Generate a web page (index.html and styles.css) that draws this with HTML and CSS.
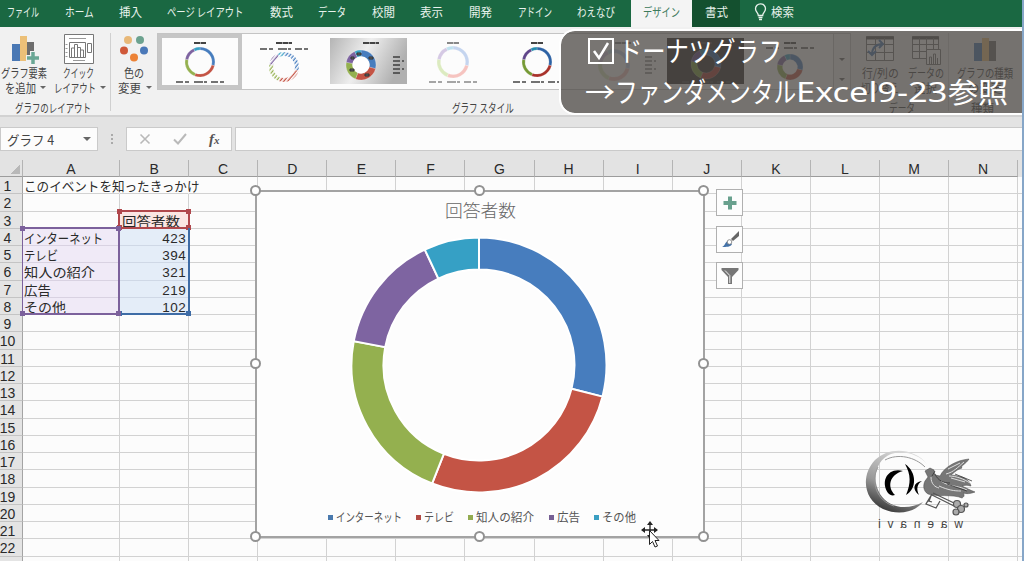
FILE: index.html
```html
<!DOCTYPE html>
<html lang="ja">
<head>
    <meta charset="UTF-8">
    <meta name="viewport" content="width=device-width, initial-scale=1.0">
    <title>ドーナツグラフ - Excel</title>
    <link rel="stylesheet" href="styles.css">
</head>
<body>
    <div class="window">
        <nav class="tabs">
            <span class="tab"><span class="fit" data-w="32">ファイル</span></span>
            <span class="tab"><span class="fit" data-w="29">ホーム</span></span>
            <span class="tab"><span class="fit" data-w="23">挿入</span></span>
            <span class="tab"><span class="fit" data-w="76">ページ レイアウト</span></span>
            <span class="tab"><span class="fit" data-w="23">数式</span></span>
            <span class="tab"><span class="fit" data-w="28">データ</span></span>
            <span class="tab"><span class="fit" data-w="23">校閲</span></span>
            <span class="tab"><span class="fit" data-w="23">表示</span></span>
            <span class="tab"><span class="fit" data-w="23">開発</span></span>
            <span class="tab"><span class="fit" data-w="34">アドイン</span></span>
            <span class="tab"><span class="fit" data-w="38">わえなび</span></span>
            <span class="tab tab-active"><span class="fit" data-w="37">デザイン</span></span>
            <span class="tab tab-context"><span class="fit" data-w="23">書式</span></span>
            <span class="tab tab-search">
                <svg width="13" height="18" viewBox="0 0 13 18" fill="none" stroke="#e8f2ec" stroke-width="1.3">
                    <path d="M4.3 12.5C4.3 9.8 1.5 9 1.5 5.8a5 5 0 0 1 10 0c0 3.200-2.800 4-2.800 6.700zM4.500 14.500h4M5 16.500h3"/>
                </svg>
                <span class="fit" data-w="23">検索</span>
            </span>
        </nav>

        <div class="ribbon">
            <section class="group group-layout">
                <div class="buttons">
                    <div class="button">
                        <svg width="30" height="32" viewBox="0 0 30 32">
                            <path fill="#4a78b4" d="M2 11h8v17H2z"/>
                            <path fill="#ecc078" d="M10 3h7v25h-7z"/>
                            <path fill="#6d6d6d" d="M17 9h7v19h-7z"/>
                            <path stroke="#f1f1f1" stroke-width="6" d="M23 18v14M16 25h14"/>
                            <path stroke="#6aa795" stroke-width="3.500" d="M23 19v12M17 25h12"/>
                        </svg>
                        <span class="fit" data-w="46">グラフ要素</span>
                        <span class="row"><span class="fit" data-w="31">を追加</span><i class="caret"></i></span>
                    </div>
                    <div class="button">
                        <svg width="32" height="32" viewBox="0 0 32 32" fill="none" stroke="#777">
                            <path fill="#fff" d="M1.500 1.500h29v29h-29z"/>
                            <path stroke="#999" d="M6 5.500h17M2.500 11.500h2M2.500 15.500h2M2.500 19.500h2M2.500 23.500h2M10 27.500h12"/>
                            <path d="M6.500 9.500h16v15h-16zM8.500 24v-9h3v9M11.500 24V11.500h3V24M14.500 24V14.500h3V24M17.500 24v-7h3v7M24.500 10.500h4v9h-4z"/>
                        </svg>
                        <span class="fit" data-w="31">クイック</span>
                        <span class="row"><span class="fit" data-w="42">レイアウト</span><i class="caret"></i></span>
                    </div>
                </div>
                <div class="group-name"><span class="fit" data-w="76">グラフのレイアウト</span></div>
            </section>

            <section class="group group-color">
                <div class="button">
                    <svg width="30" height="32" viewBox="0 0 30 32">
                        <circle cx="9" cy="7" r="4" fill="#e8b878"/>
                        <circle cx="21" cy="7" r="4" fill="#6ca28f"/>
                        <circle cx="5" cy="17.500" r="4" fill="#cf5838"/>
                        <circle cx="25" cy="17.500" r="4" fill="#4a78b8"/>
                        <circle cx="15" cy="24.500" r="4" fill="#ec8236"/>
                    </svg>
                    <span class="fit" data-w="20">色の</span>
                    <span class="row"><span class="fit" data-w="23">変更</span><i class="caret"></i></span>
                </div>
            </section>

            <section class="group group-style">
                <div class="gallery">
                    <div class="thumbs" id="thumbs"></div>
                    <div class="gallery-scroll"><i></i><i class="caret"></i><i class="caret"></i></div>
                </div>
                <div class="group-name"><span class="fit" data-w="62">グラフ スタイル</span></div>
            </section>

            <section class="group group-data">
                <div class="buttons">
                    <div class="button">
                        <svg width="30" height="32" viewBox="0 0 30 32" fill="none" stroke="#777">
                            <path fill="#fff" d="M1.500 3.500h27v24h-27z"/>
                            <path stroke="#555" stroke-width="3" d="M1 5h28"/>
                            <path d="M1.500 11.500h27M1.500 19.500h27M10.500 5v22M19.500 5v22"/>
                            <path stroke="#4a78b4" stroke-width="2" d="M7 22c0-8 4-11 11-11M14 7l4 4-4 4M3 18l4 4 4-4"/>
                        </svg>
                        <span class="fit" data-w="37">行/列の</span>
                        <span class="fit" data-w="38">切り替え</span>
                    </div>
                    <div class="button">
                        <svg width="30" height="32" viewBox="0 0 30 32" fill="none" stroke="#777">
                            <path fill="#fff" d="M1.500 3.500h26v22h-26z"/>
                            <path stroke="#555" stroke-width="3" d="M1 5h27"/>
                            <path d="M1.500 11.500h26M1.500 18.500h26M8.500 5v20M15.500 5v20M22.500 5v20"/>
                            <path fill="#fff" d="M15.500 16.500h14v15h-14zM18.500 31v-7h2v7M22.500 31v-10h2v10M26.500 31v-6"/>
                        </svg>
                        <span class="fit" data-w="36">データの</span>
                        <span class="fit" data-w="23">選択</span>
                    </div>
                </div>
                <div class="group-name"><span class="fit" data-w="26">データ</span></div>
            </section>

            <section class="group group-type">
                <div class="button">
                    <svg width="30" height="32" viewBox="0 0 30 32">
                        <path fill="#4a78b4" d="M4 10h8v18H4z"/>
                        <path fill="#ecc078" d="M12 5h7v23h-7z"/>
                        <path fill="#6d6d6d" d="M19 8h7v20h-7z"/>
                    </svg>
                    <span class="fit" data-w="56">グラフの種類</span>
                    <span class="fit" data-w="34">の変更</span>
                </div>
                <div class="group-name"><span class="fit" data-w="23">種類</span></div>
            </section>
        </div>

        <div class="formula-bar">
            <div class="name-box"><span class="fit" data-w="47">グラフ 4</span><i class="caret"></i></div>
            <div class="dots"><i></i><i></i><i></i></div>
            <div class="formula-buttons">
                <svg width="12" height="12" viewBox="0 0 12 12" fill="none" stroke="#b9b9b9" stroke-width="1.600"><path d="M1.500 1.500l9 9M10.500 1.500l-9 9"/></svg>
                <svg width="14" height="12" viewBox="0 0 14 12" fill="none" stroke="#b9b9b9" stroke-width="2"><path d="M1 6.500l4 4L13 1"/></svg>
                <span class="fx">f<small>x</small></span>
            </div>
            <div class="formula-input"></div>
        </div>

        <main class="sheet">
            <div class="grid" id="grid"></div>

            <div class="range range-red"><b></b><b></b><b></b><b></b></div>
            <div class="range range-blue"><b></b><b></b></div>
            <div class="range range-purple"><b></b><b></b><b></b><b></b></div>

            <svg class="logo" width="116" height="90" viewBox="0 0 116 90">
                <defs>
                    <linearGradient id="moon" x1="0.700" y1="0" x2="0.300" y2="1">
                        <stop offset="0" stop-color="#ddd"/>
                        <stop offset="0.600" stop-color="#999"/>
                        <stop offset="1" stop-color="#333"/>
                    </linearGradient>
                </defs>
                <path fill="url(#moon)" d="M64 17C52 1 26-1 12 13C-3 29 1 53 20 62C36 69 52 65 60 55C44 64 26 61 17 47C8 32 13 13 28 7C42 3 56 8 64 17z"/>
                <path fill="none" stroke="#999" d="M22 13C35 6 52 10 62 20M15 20C7 35 14 54 31 59"/>
                <path d="M40 24C25 20 17 34 25 46C27 48 29 49 32 48C24 40 26 28 40 24zM42 17C54 25 54 42 43 48C48 36 48 28 42 17zM59 34C50 35 49 43 56 48C53 42 54 37 59 34z"/>
                <path fill="#777" stroke="#444" stroke-width="0.500" d="M62 24l5-3 4 2 1 5 5 1c4-9 17-16 29-17-3 5-9 7-7 9-6 2-7 4-11 7 12 1 18 4 20 11-4-1-6-1-9 0 4 2 8 4 13 6-5 2-9 2-12 1 2 2 1 4-1 5-9-4-26-1-34-4-5-3-5-9-3-13l3-4z"/>
                <path fill="none" stroke="#ddd" d="M83 27c8-2 12-7 18-12M86 29c7 0 15 3 21 7M78 34c8 6 16 4 26 9M76 39c9 4 15 5 22 5M68 30c0 7 4 10 8 11M85 22l12-6M88 31l14 4"/>
                <path fill="none" stroke="#333" stroke-width="0.800" d="M72 27c3 7 9 9 15 9M84 37l20 7M92 27l17 7M72 24l-3 5"/>
                <path fill="none" stroke="#555" stroke-width="1.300" d="M70 46l21 10M69 48l22 11M69 47l-6 10 10 4 4-7M68 49l-2 5 3 1"/>
                <g fill="#aaa" stroke="#555" stroke-width="1.200">
                    <circle cx="94" cy="57" r="3.500"/><circle cx="98" cy="62" r="3.500"/><circle cx="93" cy="65" r="3"/><circle cx="103" cy="58" r="2"/>
                </g>
                <text class="logo-text" transform="translate(100 81) scale(-1 1)" textLength="85">waenavi</text>
            </svg>

            <div class="chart">
                <div class="chart-title"><span class="fit" data-w="71">回答者数</span></div>
                <svg class="donut" id="donut" width="256" height="256" viewBox="0 0 256 256"></svg>
                <div class="legend">
                    <span class="key key-1"><span class="fit" data-w="66">インターネット</span></span>
                    <span class="key key-2"><span class="fit" data-w="30">テレビ</span></span>
                    <span class="key key-3"><span class="fit" data-w="58">知人の紹介</span></span>
                    <span class="key key-4"><span class="fit" data-w="23">広告</span></span>
                    <span class="key key-5"><span class="fit" data-w="34">その他</span></span>
                </div>
                <i class="handle n w"></i><i class="handle n c"></i><i class="handle n e"></i>
                <i class="handle m w"></i><i class="handle m e"></i>
                <i class="handle s w"></i><i class="handle s c"></i><i class="handle s e"></i>
            </div>

            <div class="chart-tools">
                <span class="tool"><svg width="20" height="20" viewBox="0 0 20 20"><path stroke="#69a18e" stroke-width="4" d="M10 3.500v13M3.500 10h13"/></svg></span>
                <span class="tool"><svg width="20" height="20" viewBox="0 0 20 20"><path fill="#666" d="M19 2v5l-6 5-2-2z"/><path fill="#4472a8" d="M2 18c3-1 3-5 6-6l4 3c-1 3-6 3-10 3z"/><circle cx="9.500" cy="13" r="2.300" fill="#fff" stroke="#777" stroke-width="0.800"/></svg></span>
                <span class="tool"><svg width="20" height="20" viewBox="0 0 20 20"><path fill="#777" d="M1.500 2h17v2l-6.500 7v7H8v-7L1.500 4z"/><path fill="none" stroke="#eee" d="M5 4.500l4.800 5V17"/></svg></span>
            </div>

            <svg class="cursor" width="20" height="28" viewBox="0 0 20 28">
                <path stroke="#222" stroke-width="1.300" d="M9 2v13M2 9h14"/>
                <path fill="#222" d="M9 0l3 4H6zM0 9l4-3v6zM17 9l-4-3v6zM9 18l-3-4h6z"/>
                <path fill="#fff" stroke="#222" d="M8.500 9.500v14l3-3 2.500 5.500 2.500-1-2.500-5.500h4z"/>
            </svg>
        </main>

        <div class="caption">
            <div class="caption-line">
                <svg width="28" height="28" viewBox="0 0 28 28" fill="none" stroke="#fff" stroke-width="2"><path d="M2 2h24v24H2z"/><path stroke-width="2.500" d="M7 14l5 7L21 6"/></svg>
                <span class="fit" data-w="163">ドーナツグラフ</span>
            </div>
            <div class="caption-line">
                <span class="fit" data-w="30">→</span>
                <span class="fit" data-w="181">ファンダメンタル</span>
                <span class="fit latin" data-w="151">Excel9-23</span>
                <span class="fit" data-w="60">参照</span>
            </div>
        </div>
        <div class="edge"></div>
    </div>
    <script src="script.js"></script>
</body>
</html>
```

FILE: styles.css
```css
* {
    box-sizing: border-box;
}

body {
    margin: 0;
    font-family: "Noto Sans CJK JP", sans-serif;
    color: #444;
}

svg {
    display: block;
    flex: none;
}

.window {
    position: relative;
    width: 1024px;
    height: 561px;
    overflow: hidden;
    display: flex;
    flex-direction: column;
    background: #fcfcfc;
}

.fit {
    display: inline-block;
    flex: none;
    white-space: nowrap;
    transform-origin: left center;
}

.caret {
    flex: none;
    border: 3px solid transparent;
    border-top-color: #666;
    border-bottom: 0;
}

/* タブ */
.tabs {
    display: flex;
    height: 27px;
    flex: none;
    background: #1a6842;
    color: #e8f2ec;
    font-size: 12px;
    line-height: 24px;
}

.tab {
    padding: 0 13px 0 12.6px;
    flex: none;
}

.tab:first-child {
    padding-left: 7px;
}

.tab-active {
    width: 61px;
    margin-left: 3px;
    padding: 0 12px;
    background: #f4f4f4;
    color: #3c7a5c;
}

.tab-context {
    width: 48px;
    background: #14502f;
}

.tab-search {
    display: flex;
    align-items: center;
    gap: 4px;
    height: 24px;
    padding-left: 14px;
}

/* リボン */
.ribbon {
    display: flex;
    flex: none;
    height: 90px;
    background: #f1f1f1;
    border-bottom: 2px solid #d2d2d2;
    font-size: 12px;
    line-height: 15px;
}

.group {
    display: flex;
    flex-direction: column;
    justify-content: space-between;
    flex: none;
    padding-top: 6px;
}

.group-layout {
    width: 111px;
    background: linear-gradient(#d0d0d0, #d0d0d0) right 6px / 1px 78px no-repeat;
}

.group-color {
    width: 46px;
}

.group-style {
    width: 694px;
}

.group-data {
    width: 98px;
    padding-left: 8px;
    background: linear-gradient(#d0d0d0, #d0d0d0) right 6px / 1px 78px no-repeat;
}

.group-type {
    width: 72px;
}

.buttons {
    display: flex;
    gap: 4px;
}

.group-layout .buttons {
    gap: 5px;
}

.button {
    display: flex;
    flex-direction: column;
    align-items: center;
}

.group-layout .button {
    width: 49px;
}

.group-data .button {
    width: 42px;
}

.button .row {
    display: flex;
    align-items: center;
    gap: 4px;
    padding-left: 2px;
}

.group-name {
    text-align: center;
    padding: 0 4px 0 0;
}

.group-style .group-name {
    padding-right: 42px;
}

.gallery {
    display: flex;
    height: 57px;
    background: #fcfcfc;
    border: 1px solid #c4c4c4;
}

.thumbs {
    display: flex;
    flex: 1;
}

.thumb {
    width: 84.3px;
    height: 55px;
    flex: none;
}

.thumb.selected {
    border: 4px solid #c6c6c6;
}

.thumb.selected svg {
    margin: -4px;
}

.gallery-scroll {
    width: 17px;
    display: flex;
    flex-direction: column;
    align-items: center;
    justify-content: space-around;
    border-left: 1px solid #c4c4c4;
    background: #f4f4f4;
}

/* 数式バー */
.formula-bar {
    display: flex;
    flex: none;
    height: 43px;
    padding: 10px 2px 9px 0;
    background: #e3e3e3;
    font-size: 13px;
    line-height: 21px;
}

.name-box,
.formula-buttons,
.formula-input {
    height: 24px;
    background: #fcfcfc;
    border: 1px solid #cacaca;
}

.name-box {
    width: 98px;
    display: flex;
    align-items: center;
    justify-content: space-between;
    padding: 0 6px;
}

.name-box .caret {
    border-width: 4px 4px 0;
}

.dots {
    display: flex;
    flex-direction: column;
    align-items: center;
    justify-content: center;
    gap: 2px;
    width: 28px;
}

.dots i {
    width: 2px;
    height: 2px;
    background: #aaa;
}

.formula-buttons {
    display: flex;
    align-items: center;
    width: 106px;
    gap: 22px;
    padding-left: 12px;
}

.fx {
    font: italic bold 15px "Liberation Serif", serif;
    color: #555;
}

.fx small {
    font-size: 11px;
}

.formula-input {
    flex: 1;
    margin-left: 3px;
    border-right: 0;
}

/* シート */
.sheet {
    position: relative;
    flex: 1;
}

.grid {
    width: 1100px;
}

.line {
    display: grid;
    grid-template-columns: 23px 97px repeat(14, 69.100px);
    grid-template-rows: 100%;
    height: 17.250px;
    font-size: 13px;
    line-height: 17px;
    color: #2a2a2a;
}

.head {
    height: 17px;
    background: #e3e3e3;
    font: 14px/19px "Liberation Sans", sans-serif;
    text-align: center;
}

.head div {
    border-right: 1px solid #b4b4b4;
    border-bottom: 1px solid #9c9c9c;
    height: 17px;
}

.corner {
    background: linear-gradient(135deg, transparent 50%, #b8b8b8 50%) 11px 5px / 9px 9px no-repeat;
}

.line .number {
    background: #e4e4e4;
    border-right-color: #a4a4a4;
    border-bottom-color: #c4c4c4;
    font: 14px/19px "Liberation Sans", sans-serif;
    display: flex;
    justify-content: center;
    padding: 0 7px 0 0;
}

.cell {
    border-right: 1px solid #d2d2d2;
    border-bottom: 1px solid #d2d2d2;
    padding: 0 2px 0 1px;
    white-space: nowrap;
}

.cell.open {
    border-right-color: transparent;
}

.cell.num {
    text-align: right;
    font-family: "Liberation Sans", sans-serif;
    font-size: 13.500px;
    letter-spacing: 0.4px;
    line-height: 19px;
    background: #e4edf8;
    border-bottom-color: #cfd8e6;
}

.cell.cat {
    background: #f0eaf7;
    border-bottom-color: #d9d2e2;
}

.cell.name {
    background: #fbe6e3;
    padding-left: 2px;
}

/* 選択範囲の枠 */
.range {
    position: absolute;
    border: 2px solid;
}

.range b {
    position: absolute;
    width: 5px;
    height: 5px;
    background: currentColor;
}

.range b:nth-child(1) { right: -3px; bottom: -3px; }
.range b:nth-child(2) { left: -3px; bottom: -3px; }
.range b:nth-child(3) { right: -3px; top: -3px; }
.range b:nth-child(4) { left: -3px; top: -3px; }

.range-red {
    color: #b0474c;
    left: 118px;
    top: 50px;
    width: 72px;
    height: 19px;
}

.range-purple {
    color: #7c619c;
    left: 22px;
    top: 67px;
    width: 98px;
    height: 88px;
    border-left-width: 1px;
}

.range-blue {
    color: #3e6ca6;
    left: 120px;
    top: 68px;
    width: 70px;
    height: 87px;
    border-top: 0;
    border-left: 0;
}

/* グラフ */
.chart {
    position: absolute;
    left: 255px;
    top: 30px;
    width: 450px;
    height: 348px;
    background: #fdfdfd;
    border: 2px solid #a3a3a3;
    display: flex;
    flex-direction: column;
    align-items: center;
}

.chart-title {
    height: 45px;
    padding-top: 5px;
    font-size: 17px;
    font-weight: 300;
    line-height: 26px;
    color: #666;
}

.donut {
    margin-right: 2px;
}

.legend {
    display: flex;
    gap: 14px;
    margin-top: 15px;
    font-size: 12px;
    line-height: 18px;
    transform: translateX(2px);
}

.key {
    display: flex;
    align-items: center;
    gap: 3px;
}

.key::before {
    content: "";
    width: 5px;
    height: 5px;
    background: currentColor;
}

.key .fit {
    color: #555;
}

.key-1 { color: #4a7aae; }
.key-2 { color: #b24a44; }
.key-3 { color: #93ac51; }
.key-4 { color: #765f94; }
.key-5 { color: #3b9fc2; }

.handle {
    position: absolute;
    width: 11px;
    height: 11px;
    border: 2px solid #929292;
    border-radius: 50%;
    background: #fff;
}

.n { top: -7px; }
.m { top: 166px; }
.s { bottom: -6px; }
.w { left: -7px; }
.c { left: 217px; }
.e { right: -6px; }

.chart-tools {
    position: absolute;
    left: 716px;
    top: 29px;
    display: flex;
    flex-direction: column;
    gap: 9.5px;
}

.tool {
    width: 27px;
    height: 27px;
    display: flex;
    align-items: center;
    justify-content: center;
    background: #fdfdfd;
    border: 1px solid #b0b0b0;
}

.cursor {
    position: absolute;
    left: 641px;
    top: 361px;
}

.logo {
    position: absolute;
    left: 863px;
    top: 287px;
}

.logo-text {
    font: 12px "Liberation Sans", sans-serif;
    fill: #444;
}

/* 字幕 */
.caption {
    position: absolute;
    left: 559px;
    top: 29px;
    width: 475px;
    height: 86px;
    padding: 0 0 0 26px;
    background: rgba(78, 73, 70, 0.76);
    background-clip: padding-box;
    border: 2px solid #fff;
    border-radius: 16px 0 0 16px;
    color: #fff;
    font-size: 28px;
    line-height: 40px;
}

.caption-line {
    display: flex;
    align-items: center;
    height: 40px;
    gap: 4px;
}

.caption-line:first-child .fit {
    padding-bottom: 2px;
}

.caption-line + .caption-line {
    gap: 0;
    margin-left: -2px;
}

.latin {
    font-family: "Noto Sans", sans-serif;
}

.edge {
    position: absolute;
    top: 0;
    right: 0;
    width: 2px;
    height: 100%;
    background: #86a6c8;
}
```

FILE: script.js
```js
const survey = [
    ['インターネット', 423, 79],
    ['テレビ', 394, 34],
    ['知人の紹介', 321, 71],
    ['広告', 219, 27],
    ['その他', 102, 42]
];
const palette = ['#477dbe', '#c45445', '#94b04f', '#7e64a1', '#36a0c5'];

// ドーナツの各要素を描く
function ring(cx, cy, outer, inner, colors, stroke) {
    const total = survey.reduce((sum, item) => sum + item[1], 0);
    let angle = 0;
    return survey.map((item, i) => {
        const a = angle;
        const b = angle += item[1] / total * Math.PI * 2;
        const at = (r, t) => (cx + r * Math.sin(t)).toFixed(2) + ' ' + (cy - r * Math.cos(t)).toFixed(2);
        const big = b - a > Math.PI ? 1 : 0;
        return `<path fill="${colors[i]}" ${stroke} d="M${at(outer, a)}A${outer} ${outer} 0 ${big} 1 ${at(outer, b)}L${at(inner, b)}A${inner} ${inner} 0 ${big} 0 ${at(inner, a)}z"/>`;
    }).join('');
}

document.getElementById('donut').innerHTML =
    ring(128, 128, 127.5, 95.5, palette, 'stroke="#fff" stroke-width="2"');

// スタイル一覧
const pale = ['#c5d5ef', '#f6c4c0', '#dcebc0', '#d5c9e4', '#bfe2ef'];
const deep = ['#2d62a4', '#a8322b', '#769a35', '#60468a', '#238aac'];
const thumbs = [
    { cy: 28, r: 15, hole: 12, legend: 48 },
    { cy: 33, r: 15, hole: 11, legend: 15, hatch: true },
    { cy: 31, r: 15, hole: 8.5, side: true, bg: 'url(#silver)', cx: 34, labels: true },
    { cy: 28, r: 16, hole: 12.5, legend: 48, colors: pale },
    { cy: 28, r: 15, hole: 12, legend: 48, colors: deep },
    { cy: 31, r: 16, hole: 12, side: true, cx: 35, colors: pale },
    { cy: 30, r: 15, hole: 9, legend: 48, bg: '#2a2828', colors: deep },
    { cy: 33, r: 13, hole: 7.5, legend: 14 }
];

function marks(x, y, w, color) {
    return `<path stroke="${color}" stroke-width="1.6" stroke-dasharray="7 2 4 5 9 1 3 4" d="M${x} ${y}h${w}"/>`;
}

document.getElementById('thumbs').innerHTML = thumbs.map((t, i) => {
    const cx = t.cx || 42;
    let art = '';
    if (t.bg) art += `<rect x="3" y="4" width="77" height="46" fill="${t.bg}"/>`;
    art += ring(cx, t.cy, t.r, t.hole, t.colors || palette, 'stroke="#fff" stroke-width="0.2"');
    if (t.bg === 'url(#silver)') art += `<circle cx="${cx}" cy="${t.cy}" r="${t.hole}" fill="#fff"/>`;
    if (t.hatch) {
        art += `<circle cx="${cx}" cy="${t.cy}" r="13" fill="none" stroke="url(#hatch)" stroke-width="5"/>`;
    }
    if (t.labels) {
        art += '<path fill="#666" stroke="#333" d="M30 19h4v2h-4zM42 23h4v2h-4zM24 23h3v2h-3zM23 35h4v2h-4zM38 40h4v2h-4z"/>';
    }
    const ink = t.colors === pale ? '#888' : '#444';
    art += `<path stroke="${ink}" stroke-width="2" stroke-dasharray="6 .5" d="M${t.hatch ? 34 : 36} 9h${t.side || t.hatch ? 16 : 12}"/>`;
    if (t.legend) art += marks(18, t.legend, 51, ink);
    if (t.side) {
        for (let y = 23; y < 41; y += 4) art += marks(66, y, y % 8 === 7 ? 7 : 11, ink);
    }
    return `<div class="thumb${i ? '' : ' selected'}"><svg width="84" height="55" viewBox="0 0 84 55">
        <defs>
            <linearGradient id="silver" x2="1" y2=".3"><stop stop-color="#b4b4b4"/><stop offset=".5" stop-color="#eee"/><stop offset="1" stop-color="#b0b0b0"/></linearGradient>
            <pattern id="hatch" width="3" height="3" patternUnits="userSpaceOnUse" patternTransform="rotate(40)"><path fill="#fff" d="M0 0h1.700v3H0z"/></pattern>
        </defs>${art}</svg></div>`;
}).join('');

// セル
let html = '<div class="line head"><div class="corner"></div>';
for (const c of 'ABCDEFGHIJKLMN') html += `<div>${c}</div>`;
html += '</div>';

for (let r = 1; r <= 23; r++) {
    html += `<div class="line"><div class="cell number">${r < 23 ? r : ''}</div>`;
    for (let c = 0; c < 15; c++) {
        const item = survey[r - 4];
        let cls = 'cell';
        let text = '';
        if (r === 1 && c === 0) text = '<span class="fit" data-w="175">このイベントを知ったきっかけ</span>';
        if (r === 1 && c < 2) cls += ' open';
        if (r === 3 && c === 1) {
            cls += ' name';
            text = '<span class="fit" data-w="58">回答者数</span>';
        }
        if (item && c === 0) {
            cls += ' cat';
            text = `<span class="fit" data-w="${item[2]}">${item[0]}</span>`;
        }
        if (item && c === 1) {
            cls += ' num';
            text = `<span class="fit" data-w="24">${item[1]}</span>`;
        }
        html += `<div class="${cls}">${text}</div>`;
    }
    html += '</div>';
}
document.getElementById('grid').innerHTML = html;

// 文字幅を UI の幅に合わせる
document.querySelectorAll('.fit').forEach(el => {
    const natural = el.offsetWidth;
    const width = Number(el.dataset.w);
    el.style.transform = `scaleX(${width / natural})`;
    el.style.marginRight = `${width - natural}px`;
});
```
